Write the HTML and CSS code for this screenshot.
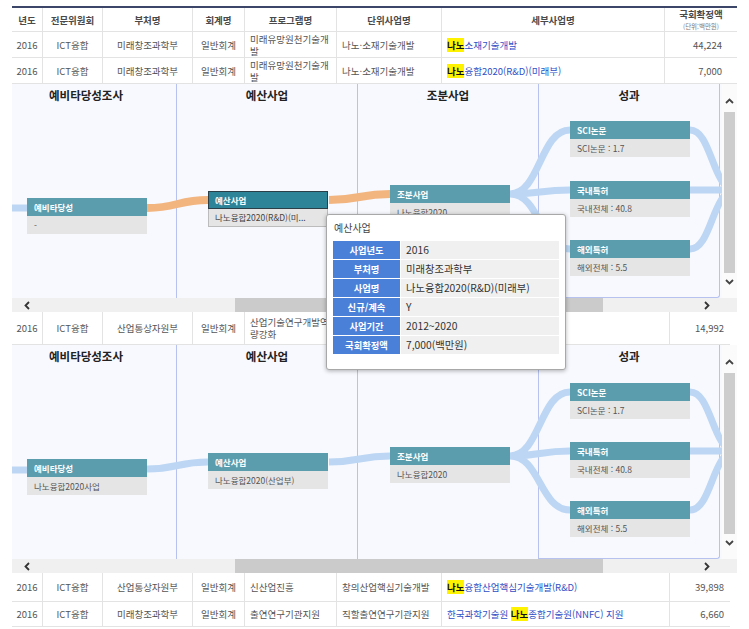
FILE: index.html
```html
<!DOCTYPE html>
<html lang="ko">
<head>
<meta charset="utf-8">
<title>사업 목록</title>
<link rel="stylesheet" href="styles.css">
</head>
<body>
<div class="page">
  <div class="row top thead">
    <div class="cell">년도</div>
    <div class="cell">전문위원회</div>
    <div class="cell">부처명</div>
    <div class="cell">회계명</div>
    <div class="cell">프로그램명</div>
    <div class="cell">단위사업명</div>
    <div class="cell">세부사업명</div>
    <div class="cell stack"><span class="amt">국회확정액</span><span class="unit">(단위:백만원)</span></div>
  </div>
  <div class="row top r1">
    <div class="cell ctr">2016</div>
    <div class="cell ctr">ICT융합</div>
    <div class="cell ctr">미래창조과학부</div>
    <div class="cell ctr">일반회계</div>
    <div class="cell">미래유망원천기술개발</div>
    <div class="cell">나노·소재기술개발</div>
    <div class="cell"><span class="link"><span class="hl">나노</span>소재기술개발</span></div>
    <div class="cell num">44,224</div>
  </div>
  <div class="row top r2">
    <div class="cell ctr">2016</div>
    <div class="cell ctr">ICT융합</div>
    <div class="cell ctr">미래창조과학부</div>
    <div class="cell ctr">일반회계</div>
    <div class="cell">미래유망원천기술개발</div>
    <div class="cell">나노·소재기술개발</div>
    <div class="cell"><span class="link"><span class="hl">나노</span>융합2020(R&amp;D)(미래부)</span></div>
    <div class="cell num">7,000</div>
  </div>

  <div class="panel">
    <div class="canvas">
      <div class="inner">
        <div class="col">예비타당성조사</div>
        <div class="col">예산사업</div>
        <div class="col">조분사업</div>
        <div class="col last">성과</div>
        <svg class="flows" width="760" height="214" viewBox="0 0 760 214">
          <g fill="none" stroke-width="7">
            <path d="M0 124H31" stroke="#bcd6f3"/>
            <path d="M151 124C181 124 182 116 212 116" stroke="#f3b580" stroke-width="8"/>
            <path d="M333 116C363 116 364 110 394 110" stroke="#f3b580" stroke-width="8"/>
            <path d="M514 110C544 110 544 46 574 46M514 110C544 110 544 106 574 106M514 110C544 110 544 165 574 165" stroke="#bcd6f3"/>
            <path d="M694 46C716 46 716 106 740 106M694 106H760M694 165C716 165 716 106 740 106" stroke="#bcd6f3"/>
          </g>
        </svg>
        <div class="node n-pre"><div class="nh">예비타당성</div><div class="nb">-</div></div>
        <div class="node n-bud sel"><div class="nh">예산사업</div><div class="nb">나노융합2020(R&amp;D)(미...</div></div>
        <div class="node n-sub"><div class="nh">조분사업</div><div class="nb">나노융합2020</div></div>
        <div class="node n-sci"><div class="nh">SCI논문</div><div class="nb">SCI논문 : 1.7</div></div>
        <div class="node n-dom"><div class="nh">국내특허</div><div class="nb">국내전체 : 40.8</div></div>
        <div class="node n-for"><div class="nh">해외특허</div><div class="nb">해외전체 : 5.5</div></div>
      </div>
    </div>
    <div class="vscroll">
      <div class="vbtn up"><svg width="9" height="6" viewBox="0 0 9 6"><polyline points="1,5 4.5,1.5 8,5" fill="none" stroke="#444" stroke-width="1.8"/></svg></div>
      <div class="vthumb"></div>
      <div class="vbtn down"><svg width="9" height="6" viewBox="0 0 9 6"><polyline points="1,1 4.5,4.5 8,1" fill="none" stroke="#444" stroke-width="1.8"/></svg></div>
    </div>
    <div class="hscroll">
      <div class="hbtn"><svg width="6" height="9" viewBox="0 0 6 9"><polyline points="5,1 1.5,4.5 5,8" fill="none" stroke="#333" stroke-width="1.8"/></svg></div>
      <div class="hgap"></div>
      <div class="hthumb"></div>
      <div class="hfill"></div>
      <div class="hbtn"><svg width="6" height="9" viewBox="0 0 6 9"><polyline points="1,1 4.5,4.5 1,8" fill="none" stroke="#333" stroke-width="1.8"/></svg></div>
    </div>
    <div class="corner"></div>
  </div>

  <div class="row bot r3">
    <div class="cell ctr">2016</div>
    <div class="cell ctr">ICT융합</div>
    <div class="cell ctr">산업통상자원부</div>
    <div class="cell ctr">일반회계</div>
    <div class="cell">산업기술연구개발역량강화</div>
    <div class="cell"></div>
    <div class="cell"></div>
    <div class="cell num">14,992</div>
  </div>

  <div class="panel p2">
    <div class="canvas">
      <div class="inner">
        <div class="col">예비타당성조사</div>
        <div class="col">예산사업</div>
        <div class="col">조분사업</div>
        <div class="col last">성과</div>
        <svg class="flows" width="760" height="214" viewBox="0 0 760 214">
          <g fill="none" stroke-width="7" stroke="#bcd6f3">
            <path d="M0 125H31"/>
            <path d="M151 124C181 124 182 117 212 117"/>
            <path d="M333 117C363 117 364 111 394 111"/>
            <path d="M514 111C544 111 544 47 574 47M514 111C544 111 544 106 574 106M514 111C544 111 544 165 574 165"/>
            <path d="M694 47C716 47 716 106 740 106M694 106H760M694 165C716 165 716 106 740 106"/>
          </g>
        </svg>
        <div class="node n-pre"><div class="nh">예비타당성</div><div class="nb">나노융합2020사업</div></div>
        <div class="node n-bud2"><div class="nh">예산사업</div><div class="nb">나노융합2020(산업부)</div></div>
        <div class="node n-sub2"><div class="nh">조분사업</div><div class="nb">나노융합2020</div></div>
        <div class="node n-sci2"><div class="nh">SCI논문</div><div class="nb">SCI논문 : 1.7</div></div>
        <div class="node n-dom"><div class="nh">국내특허</div><div class="nb">국내전체 : 40.8</div></div>
        <div class="node n-for"><div class="nh">해외특허</div><div class="nb">해외전체 : 5.5</div></div>
      </div>
    </div>
    <div class="vscroll">
      <div class="vbtn up"><svg width="9" height="6" viewBox="0 0 9 6"><polyline points="1,5 4.5,1.5 8,5" fill="none" stroke="#444" stroke-width="1.8"/></svg></div>
      <div class="vthumb"></div>
      <div class="vbtn down"><svg width="9" height="6" viewBox="0 0 9 6"><polyline points="1,1 4.5,4.5 8,1" fill="none" stroke="#444" stroke-width="1.8"/></svg></div>
    </div>
    <div class="hscroll">
      <div class="hbtn"><svg width="6" height="9" viewBox="0 0 6 9"><polyline points="5,1 1.5,4.5 5,8" fill="none" stroke="#333" stroke-width="1.8"/></svg></div>
      <div class="hgap"></div>
      <div class="hthumb"></div>
      <div class="hfill"></div>
      <div class="hbtn"><svg width="6" height="9" viewBox="0 0 6 9"><polyline points="1,1 4.5,4.5 1,8" fill="none" stroke="#333" stroke-width="1.8"/></svg></div>
    </div>
    <div class="corner"></div>
  </div>

  <div class="row bot r4">
    <div class="cell ctr">2016</div>
    <div class="cell ctr">ICT융합</div>
    <div class="cell ctr">산업통상자원부</div>
    <div class="cell ctr">일반회계</div>
    <div class="cell">신산업진흥</div>
    <div class="cell">창의산업핵심기술개발</div>
    <div class="cell"><span class="link"><span class="hl">나노</span>융합산업핵심기술개발(R&amp;D)</span></div>
    <div class="cell num">39,898</div>
  </div>
  <div class="row bot r5">
    <div class="cell ctr">2016</div>
    <div class="cell ctr">ICT융합</div>
    <div class="cell ctr">미래창조과학부</div>
    <div class="cell ctr">일반회계</div>
    <div class="cell">출연연구기관지원</div>
    <div class="cell">직할출연연구기관지원</div>
    <div class="cell"><span class="link">한국과학기술원 <span class="hl">나노</span>종합기술원(NNFC) 지원</span></div>
    <div class="cell num">6,660</div>
  </div>

  <div class="tip">
    <div class="tip-title">예산사업</div>
    <div class="tip-grid">
      <div class="tk">사업년도</div><div class="tv">2016</div>
      <div class="tk">부처명</div><div class="tv">미래창조과학부</div>
      <div class="tk">사업명</div><div class="tv">나노융합2020(R&amp;D)(미래부)</div>
      <div class="tk">신규/계속</div><div class="tv">Y</div>
      <div class="tk">사업기간</div><div class="tv">2012~2020</div>
      <div class="tk">국회확정액</div><div class="tv">7,000(백만원)</div>
    </div>
  </div>
</div>
</body>
</html>
```

FILE: styles.css
```css
* { box-sizing: border-box; margin: 0; padding: 0; }
html, body { background: #fff; }
body {
  font-family: "Noto Sans CJK KR", "Noto Sans", sans-serif;
  font-size: 9.5px;
  color: #555;
}
.page {
  position: relative;
  width: 749px;
  height: 629px;
  padding: 6px 0 0 12px;
  overflow: hidden;
}

/* table rows */
.row { display: grid; border-bottom: 1px solid #e3e3e3; }
.top { width: 725px; grid-template-columns: 31px 60px 90px 52px 92px 105px 223px 72px; }
.bot { width: 718px; grid-template-columns: 31px 60px 90px 52px 92px 105px 228px 60px; }
.cell {
  display: flex;
  align-items: center;
  padding: 0 5px;
  border-right: 1px solid #e3e3e3;
  line-height: 12px;
  overflow: hidden;
}
.cell:last-child { border-right: 0; }
.ctr { justify-content: center; text-align: center; padding: 0 2px; }
.num { justify-content: flex-end; }
.top .num { padding-right: 15px; }
.bot .num { padding-right: 6px; }

.thead { height: 26px; border-top: 2px solid #3c4668; }
.thead .cell {
  justify-content: center;
  font-weight: bold;
  font-size: 9.5px;
  color: #4a4a4a;
}
.thead .stack { flex-direction: column; padding: 0 2px; }
.amt { display: block; line-height: 13px; }
.unit { display: block; font-size: 6.5px; line-height: 10px; font-weight: normal; color: #777; }

.r1, .r2 { height: 26px; }
.r3 { height: 33px; }
.r4 { height: 29px; }
.r5 { height: 25px; }

.link { color: #2f4fc6; white-space: nowrap; }
.hl { background: #fff200; color: #111; font-weight: bold; }

/* diagram panels */
.panel {
  display: grid;
  width: 725px;
  grid-template-columns: 710px 15px;
  grid-template-rows: 214px 14px;
}
.canvas { position: relative; overflow: hidden; background: #f7f9fe; }
.inner {
  position: relative;
  margin-left: -16px;
  width: 760px;
  height: 214px;
  display: grid;
  grid-template-columns: repeat(4, 181px);
}
.col {
  border-right: 1px solid #b7c3ee;
  text-align: center;
  font-size: 11.5px;
  font-weight: bold;
  color: #222;
  line-height: 16px;
  padding-top: 3px;
}
.col.last { border-bottom: 1px solid #b7c3ee; border-bottom-right-radius: 3px; }
.flows { position: absolute; left: 0; top: 0; }

.node { position: absolute; width: 120px; font-size: 8.5px; }
.nh {
  height: 18px;
  background: #5b9cad;
  color: #fff;
  font-weight: bold;
  line-height: 18px;
  padding-left: 7px;
}
.nb {
  height: 18px;
  background: #e5e5e5;
  color: #555;
  line-height: 18px;
  padding-left: 7px;
  white-space: nowrap;
  overflow: hidden;
}
.sel .nh { background: #2d8397; border: 1px solid #2a3f47; line-height: 16px; padding-left: 6px; }
.sel .nb { border: 1px solid #bcbcbc; border-top: 0; line-height: 17px; padding-left: 6px; color: #444; }

.n-pre { left: 31px; top: 114px; }
.n-bud { left: 212px; top: 107px; }
.n-bud2 { left: 212px; top: 108px; }
.n-sub { left: 394px; top: 101px; }
.n-sub2 { left: 394px; top: 102px; }
.n-sci { left: 574px; top: 37px; }
.n-sci2 { left: 574px; top: 38px; }
.n-dom { left: 574px; top: 97px; }
.n-for { left: 574px; top: 156px; }

/* scrollbars */
.vscroll { display: grid; grid-template-rows: 28px 1fr 25px; background: #fbfbfb; }
.vbtn { display: flex; justify-content: center; }
.vbtn.up { padding-top: 14px; }
.vbtn.down { padding-top: 6px; }
.vthumb { margin: 0 2px; background: #cdcdcd; }
.hscroll { display: flex; background: #f0f0f0; }
.hbtn { width: 30px; display: flex; align-items: center; justify-content: center; }
.hgap { width: 193px; }
.hthumb { width: 368px; background: #cbcbcb; }
.hfill { flex: 1; }
.corner { background: #f0f0f0; }

/* tooltip */
.tip {
  position: absolute;
  left: 326px;
  top: 214px;
  width: 240px;
  height: 156px;
  background: #fff;
  border: 1px solid #a8a8a8;
  border-radius: 3px;
  box-shadow: 0 1px 4px rgba(0, 0, 0, 0.3);
  padding: 6px 6px 0 6px;
}
.tip-title { font-size: 10px; color: #444; line-height: 14px; margin-bottom: 6px; padding-left: 1px; }
.tip-grid { display: grid; grid-template-columns: 67px 159px; grid-auto-rows: 19px; }
.tk {
  background: #4b80d8;
  color: #fff;
  font-weight: bold;
  font-size: 9.3px;
  text-align: center;
  line-height: 18px;
  border-bottom: 1px solid #fff;
}
.tv {
  background: #f0f0f0;
  color: #333;
  font-size: 10.3px;
  line-height: 18px;
  padding-left: 5px;
  border-bottom: 1px solid #fff;
  border-left: 1px solid #fff;
}
```
